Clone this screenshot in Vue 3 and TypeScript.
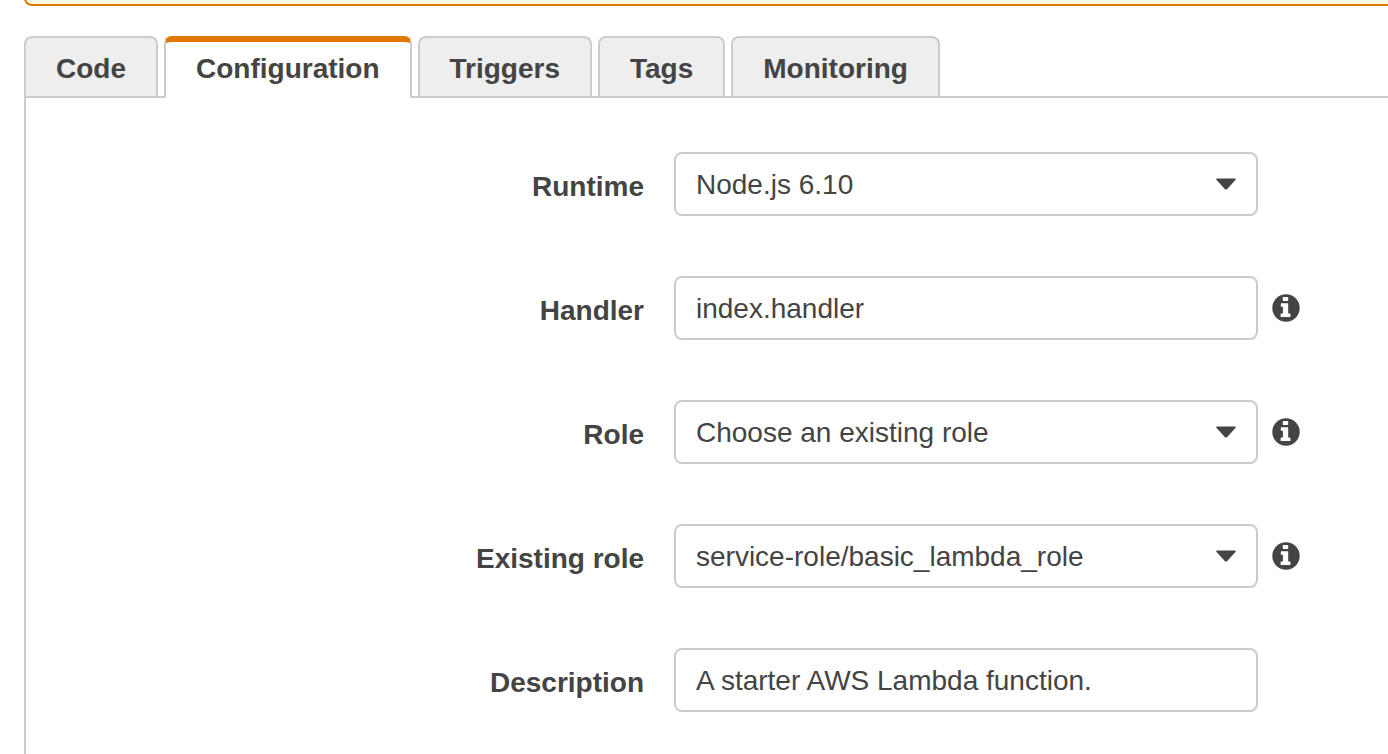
<script setup lang="ts">
import { reactive, ref } from 'vue'

interface Field {
  id: string
  label: string
  kind: 'select' | 'text'
  options?: string[]
  info: boolean
}

const tabs: string[] = ['Code', 'Configuration', 'Triggers', 'Tags', 'Monitoring']
const activeTab = ref<string>('Configuration')

const fields: Field[] = [
  { id: 'runtime', label: 'Runtime', kind: 'select', options: ['Node.js 6.10'], info: false },
  { id: 'handler', label: 'Handler', kind: 'text', info: true },
  { id: 'role', label: 'Role', kind: 'select', options: ['Choose an existing role'], info: true },
  {
    id: 'existing-role',
    label: 'Existing role',
    kind: 'select',
    options: ['service-role/basic_lambda_role'],
    info: true,
  },
  { id: 'description', label: 'Description', kind: 'text', info: false },
]

const values = reactive<Record<string, string>>({
  runtime: 'Node.js 6.10',
  handler: 'index.handler',
  role: 'Choose an existing role',
  'existing-role': 'service-role/basic_lambda_role',
  description: 'A starter AWS Lambda function.',
})
</script>

<template>
  <main class="page">
    <div class="notice"></div>

    <div class="tabs" role="tablist">
      <button
        v-for="tab in tabs"
        :key="tab"
        type="button"
        role="tab"
        class="tab"
        :class="{ active: tab === activeTab }"
        :aria-selected="tab === activeTab"
        @click="activeTab = tab"
      >
        {{ tab }}
      </button>
    </div>

    <form class="panel" @submit.prevent>
      <div v-for="field in fields" :key="field.id" class="row">
        <label class="label" :for="field.id">{{ field.label }}</label>
        <div class="field">
          <div class="box">
            <template v-if="field.kind === 'select'">
              <select :id="field.id" v-model="values[field.id]" class="control">
                <option v-for="option in field.options" :key="option" :value="option">{{ option }}</option>
              </select>
              <svg class="caret" viewBox="0 0 20 12" aria-hidden="true">
                <path d="M1.2 0.5H18.8Q20.4 0.7 19.4 2L11 11.2Q10 12 9 11.2L0.6 2Q-0.4 0.7 1.2 0.5Z" />
              </svg>
            </template>
            <input v-else :id="field.id" v-model="values[field.id]" class="control" type="text" />
          </div>
          <button v-if="field.info" type="button" class="info" :aria-label="`About ${field.label}`">
            <svg viewBox="0 0 28 28" aria-hidden="true">
              <circle class="disc" cx="14" cy="14" r="13.7" />
              <path
                class="mark"
                d="M11.4 3H15.6Q16.2 3 16.2 3.6V6.4Q16.2 7 15.6 7H11.4Q10.8 7 10.8 6.4V3.6Q10.8 3 11.4 3Z
                   M9.4 9.3H15.6Q16.2 9.3 16.2 9.9V19.4H17.8Q18.4 19.4 18.4 20V22.4Q18.4 23 17.8 23H9.2Q8.6 23 8.6 22.4V20Q8.6 19.4 9.2 19.4H10.9V12.8H9.4Q8.8 12.8 8.8 12.2V9.9Q8.8 9.3 9.4 9.3Z"
              />
            </svg>
          </button>
        </div>
      </div>
    </form>
  </main>
</template>

<style>
body {
  margin: 0;
  background: #fff;
}
</style>

<style scoped>
.page {
  box-sizing: border-box;
  display: flex;
  flex-direction: column;
  min-height: 100vh;
  padding-left: 24px;
  color: #444;
  font-family: 'Liberation Sans', Arial, sans-serif;
  font-size: 28px;
  line-height: 32px;
}

.notice {
  box-sizing: border-box;
  height: 20px;
  margin: -14px 0 30px;
  border: 2px solid #e07700;
  border-width: 0 0 2px 2px;
  border-bottom-left-radius: 8px;
  background: #fcf8e6;
}

.tabs {
  display: flex;
  gap: 6px;
}

.tab {
  box-sizing: border-box;
  height: 60px;
  padding: 4px 30px 0;
  border: 2px solid #ccc;
  border-bottom: 0;
  border-radius: 8px 8px 0 0;
  background: #eee;
  color: inherit;
  font: inherit;
  font-weight: bold;
  cursor: pointer;
}

.tab.active {
  z-index: 1;
  height: 62px;
  margin-bottom: -2px;
  padding: 0 30px 2px;
  border-top: 6px solid #e07700;
  border-radius: 8px 8px 2px 2px;
  background: #fff;
}

.panel {
  display: flex;
  flex: 1;
  flex-direction: column;
  gap: 60px;
  padding: 54px 0 40px 6px;
  border: 2px solid #ccc;
  border-width: 2px 0 0 2px;
}

.row {
  display: grid;
  grid-template-columns: minmax(0, 6fr) minmax(0, 7fr);
  column-gap: 30px;
  align-items: center;
}

.label {
  padding-top: 6px;
  font-weight: bold;
  text-align: right;
}

.field {
  display: flex;
  gap: 14px;
  align-items: center;
}

.box {
  position: relative;
  flex: 0 1 584px;
  min-width: 0;
}

.control {
  box-sizing: border-box;
  display: block;
  width: 100%;
  height: 64px;
  margin: 0;
  padding: 2px 20px 0;
  border: 2px solid #ccc;
  border-radius: 8px;
  background: #fff;
  color: inherit;
  font: inherit;
  appearance: none;
}

.caret {
  position: absolute;
  top: 26px;
  right: 22px;
  width: 20px;
  height: 12px;
  fill: #444;
  pointer-events: none;
}

.info {
  flex: none;
  width: 28px;
  height: 28px;
  padding: 0;
  border: 0;
  background: none;
  cursor: pointer;
}

.info svg {
  display: block;
  width: 28px;
  height: 28px;
}

.disc {
  fill: #444;
}

.mark {
  fill: #fff;
}
</style>
